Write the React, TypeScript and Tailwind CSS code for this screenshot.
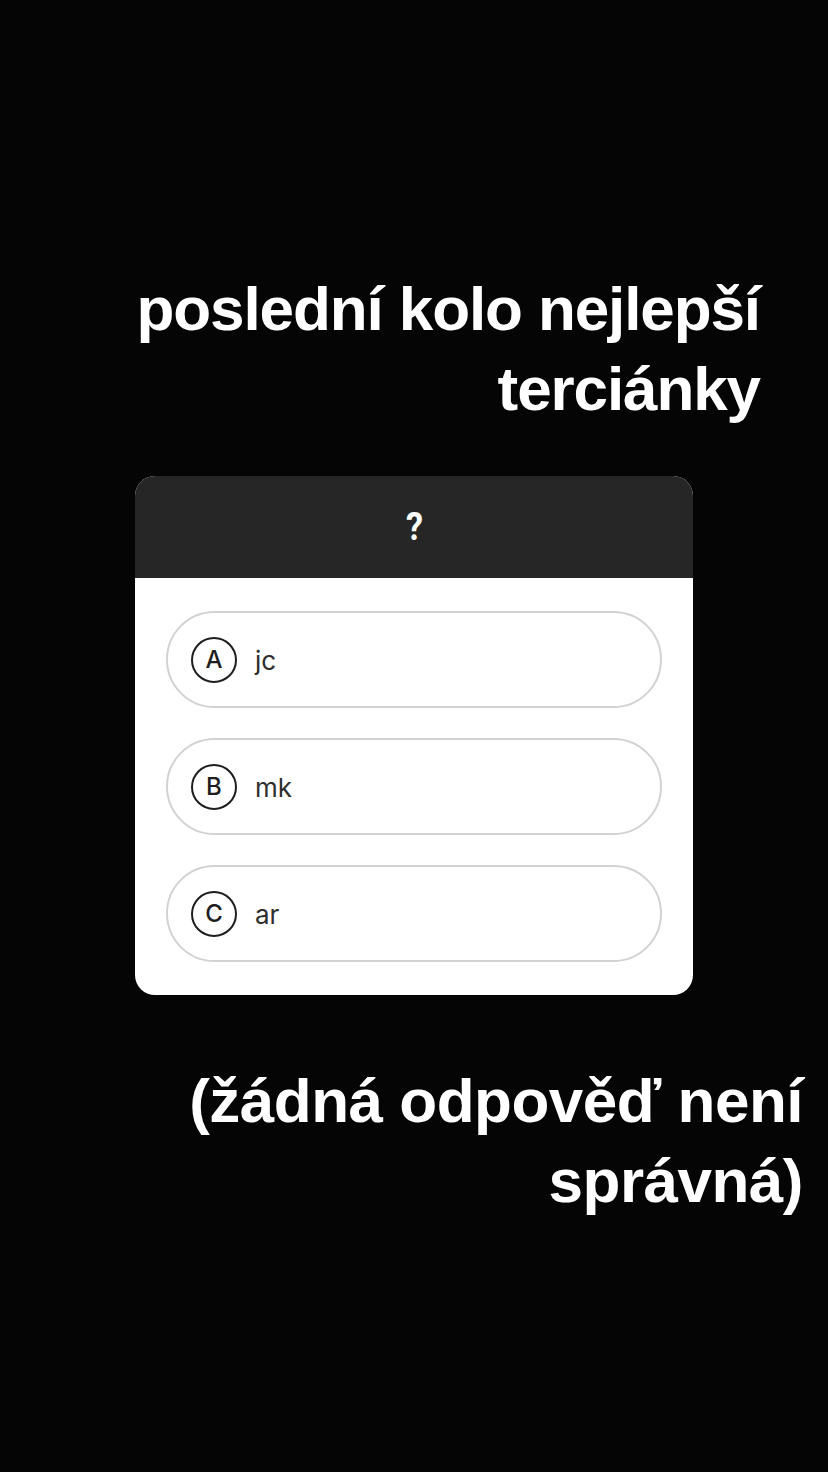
const options = [
  { letter: "A", text: "jc" },
  { letter: "B", text: "mk" },
  { letter: "C", text: "ar" },
];

const App = () => {
  return (
    <div className="min-h-[1472px] w-full bg-[#050505] flex flex-col font-['Liberation_Sans',Arial,sans-serif] overflow-hidden">
      <div className="mt-[269px] pr-[68px] text-right text-white font-bold text-[62px] leading-[80px] tracking-[-1.1px]">
        <p>poslední kolo nejlepší</p>
        <p>terciánky</p>
      </div>

      <div className="mt-[47px] mx-auto w-[558px] rounded-[20px] overflow-hidden bg-white">
        <div className="h-[102px] bg-[#262626] flex items-center justify-center">
          <span className="text-white font-bold text-[38px] leading-none font-['Roboto',sans-serif] scale-x-90">?</span>
        </div>
        <div className="flex flex-col gap-[30px] px-[31px] pt-[33px] pb-[33px]">
          {options.map((o) => (
            <div key={o.letter} className="h-[97px] rounded-full border-2 border-[#d2d2d2] flex items-center pl-[23px] gap-[18px]">
              <div className="w-[46px] h-[46px] rounded-full border-[2.5px] border-[#1e1e1e] flex items-center justify-center text-[#1e1e1e] text-[24px] font-medium font-['Inter',sans-serif]">
                {o.letter}
              </div>
              <span className="text-[#2e2e2e] text-[26px] font-['Inter',sans-serif] pt-[2px]">{o.text}</span>
            </div>
          ))}
        </div>
      </div>

      <div className="mt-[66px] pr-[25px] text-right text-white font-bold text-[62px] leading-[80px] tracking-[-0.5px]">
        <p>(žádná odpověď není</p>
        <p>správná)</p>
      </div>
    </div>
  );
};

export default App;
